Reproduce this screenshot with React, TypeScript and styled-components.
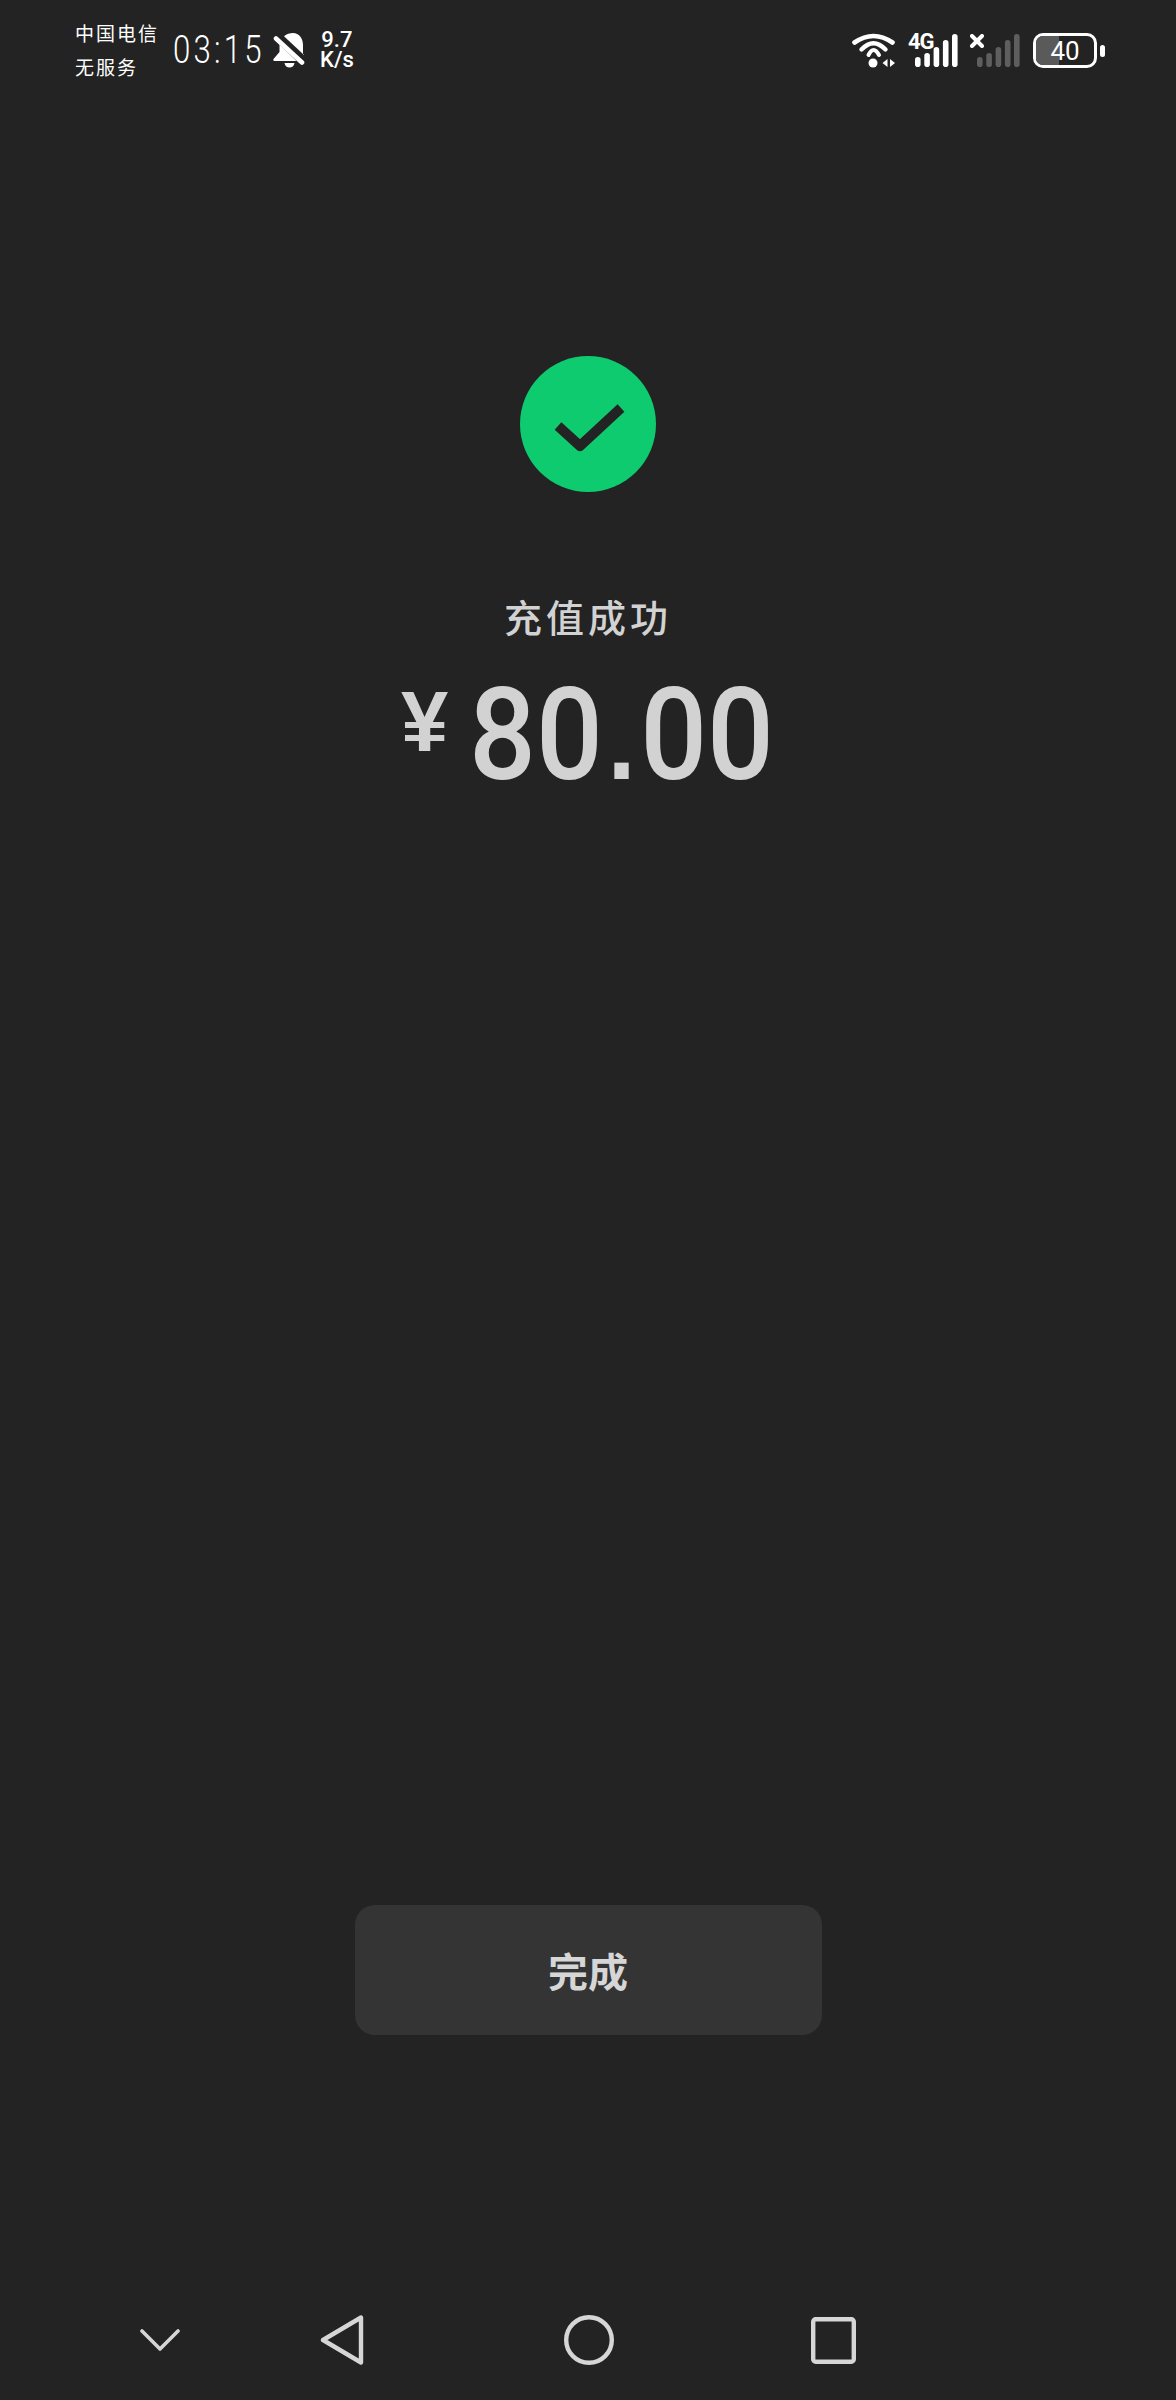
import { FC } from "react";
import styled, { createGlobalStyle } from "styled-components";

const GlobalStyle = createGlobalStyle`
  html, body {
    margin: 0;
    padding: 0;
    background: #232323;
  }
`;

const CjkStack = `"Noto Sans CJK SC", "Liberation Sans", sans-serif`;

const signalBars = [
  { x: 0, h: 10 },
  { x: 9.3, h: 14 },
  { x: 18.6, h: 20 },
  { x: 27.9, h: 27 },
  { x: 37, h: 33 },
];

const WifiIcon: FC = () => (
  <svg width="44" height="35" viewBox="0 0 44 35" fill="none">
    <path d="M2.500 9.500Q21.500 -3.500 40.500 9.500" stroke="#fff" strokeWidth="4.600" strokeLinecap="round" />
    <path d="M9.500 16.500Q21.500 3.900 33.500 16.500" stroke="#fff" strokeWidth="4.400" strokeLinecap="round" />
    <path d="M16.500 22Q21.500 12 27 22" stroke="#fff" strokeWidth="4" strokeLinecap="round" />
    <circle cx="21" cy="30" r="4.500" fill="#fff" />
    <path d="M35.500 26v8l-5-4zM38 26v8l5-4z" fill="#fff" />
  </svg>
);

const BellOffIcon: FC = () => (
  <svg width="33" height="35" viewBox="0 0 33 35" fill="none">
    <path d="M11 3.300C13.500 1 17 0 20 0C26 0 30 5 30 12V22L31 22z" fill="#fff" />
    <path d="M6.500 11.500V19L.5 26C0 27 .5 28 1.500 28H23.500z" fill="#fff" />
    <path d="M11.500 30H21.500C21 33 19 34.500 16.500 34.500S12 33 11.500 30z" fill="#fff" />
    <path d="M3 5.500L29 29.500" stroke="#fff" strokeWidth="4.600" strokeLinecap="round" />
  </svg>
);

const SignalBars: FC<{ color: string }> = ({ color }) => (
  <svg width="43" height="33" viewBox="0 0 43 33">
    {signalBars.map((bar) => (
      <rect key={bar.x} x={bar.x} y={33 - bar.h} width="5.600" height={bar.h} rx="2.800" fill={color} />
    ))}
  </svg>
);

const CrossIcon: FC = () => (
  <svg width="14" height="14" viewBox="0 0 14 14">
    <path d="M2 2l10 10M12 2L2 12" stroke="#fff" strokeWidth="4" strokeLinecap="round" />
  </svg>
);

const CheckIcon: FC = () => (
  <svg width="136" height="136" viewBox="0 0 136 136">
    <circle cx="68" cy="68" r="68" fill="#0ecb6f" />
    <path d="M38 70L60 90L101 52" fill="none" stroke="#232323" strokeWidth="10" strokeLinejoin="round" />
  </svg>
);

const App: FC = () => {
  return (
    <Page>
      <GlobalStyle />
      <StatusBar>
        <StatusLeft>
          <Carrier>
            <CarrierLine>中国电信</CarrierLine>
            <CarrierLine>无服务</CarrierLine>
          </Carrier>
          <ClockSlot>
            <Clock>03:15</Clock>
          </ClockSlot>
          <BellOffIcon />
          <NetSpeed>
            <span>9.7</span>
            <span>K/s</span>
          </NetSpeed>
        </StatusLeft>
        <StatusRight>
          <WifiIcon />
          <SignalGroup $width={43} $gap={19}>
            <NetworkLabel>4G</NetworkLabel>
            <SignalBars color="#ffffff" />
          </SignalGroup>
          <SignalGroup $width={50} $gap={12}>
            <CrossMark>
              <CrossIcon />
            </CrossMark>
            <SignalBars color="#5e5e5e" />
          </SignalGroup>
          <Battery>
            <BatteryBody>
              <BatteryFill />
              <BatteryLevel>40</BatteryLevel>
            </BatteryBody>
            <BatteryNub />
          </Battery>
        </StatusRight>
      </StatusBar>

      <Result>
        <CheckIcon />
        <ResultTitle>充值成功</ResultTitle>
        <Amount>
          <Currency>¥</Currency>
          <Value>
            80<ValueDot>.</ValueDot>00
          </Value>
        </Amount>
      </Result>

      <DoneButton>完成</DoneButton>

      <NavBar>
        <NavIcon $gap={140} width="40" height="22" viewBox="0 0 40 22">
          <path d="M2 2L20 20L38 2" fill="none" stroke="#d6d6d6" strokeWidth="3.600" strokeLinecap="round" strokeLinejoin="round" />
        </NavIcon>
        <NavIcon $gap={200} width="44" height="50" viewBox="0 0 44 50">
          <path d="M41 2.500V47.500L3 25z" fill="none" stroke="#d6d6d6" strokeWidth="4.400" strokeLinejoin="round" />
        </NavIcon>
        <NavIcon $gap={197} width="50" height="50" viewBox="0 0 50 50">
          <circle cx="25" cy="25" r="22.800" fill="none" stroke="#d6d6d6" strokeWidth="4.400" />
        </NavIcon>
        <NavIcon $gap={0} width="45" height="47" viewBox="0 0 45 47">
          <rect x="2.200" y="2.200" width="40.600" height="42.600" rx="2.500" fill="none" stroke="#d6d6d6" strokeWidth="4.400" />
        </NavIcon>
      </NavBar>
    </Page>
  );
};

const Page = styled.div`
  width: 1176px;
  height: 2400px;
  background: #232323;

  display: flex;
  flex-direction: column;
  align-items: center;
  overflow: hidden;
`;

const StatusBar = styled.div`
  width: 100%;
  box-sizing: border-box;
  height: 100px;
  padding: 20px 71px 0 75px;

  display: flex;
  justify-content: space-between;
  align-items: flex-start;
  color: #fff;
`;

const StatusLeft = styled.div`
  display: flex;
  align-items: center;
  height: 60px;
`;

const Carrier = styled.div`
  width: 98px;
  display: flex;
  flex-direction: column;
  gap: 8px;
`;

const CarrierLine = styled.span`
  font-family: ${CjkStack};
  font-size: 19px;
  line-height: 26px;
  letter-spacing: 2px;
  white-space: nowrap;
`;

const ClockSlot = styled.div`
  width: 100px;
`;

// the clock face runs narrower than Roboto's regular width
const Clock = styled.span`
  display: inline-block;
  font-family: Roboto, sans-serif;
  font-weight: 300;
  font-size: 39px;
  letter-spacing: 4px;
  transform: scaleX(0.8);
  transform-origin: left center;
`;

const NetSpeed = styled.div`
  margin-left: 14px;
  display: flex;
  flex-direction: column;
  align-items: center;
  font-family: Roboto, sans-serif;
  font-weight: 500;
  font-size: 22px;
  line-height: 20px;
`;

const StatusRight = styled.div`
  display: flex;
  align-items: flex-start;
  padding-top: 13px;
`;

const SignalGroup = styled.div<{ $width: number; $gap: number }>`
  position: relative;
  margin-left: ${({ $gap }) => $gap}px;
  margin-top: 1px;
  width: ${({ $width }) => $width}px;
  height: 33px;
  display: flex;
  justify-content: flex-end;
`;

const NetworkLabel = styled.span`
  position: absolute;
  left: -7px;
  top: -3px;
  font-family: Roboto, sans-serif;
  font-weight: 700;
  font-size: 22px;
  line-height: 22px;
  letter-spacing: -1px;
  color: #fff;
`;

const CrossMark = styled.span`
  position: absolute;
  left: 0;
  top: 0;
  display: flex;
`;

const Battery = styled.div`
  margin-left: 13px;
  display: flex;
  align-items: center;
  gap: 3px;
`;

const BatteryBody = styled.div`
  position: relative;
  width: 64px;
  height: 35px;
  box-sizing: border-box;
  border: 3px solid #fff;
  border-radius: 10px;
  overflow: hidden;

  display: flex;
  align-items: center;
  justify-content: center;
`;

const BatteryFill = styled.div`
  position: absolute;
  left: 0;
  top: 0;
  bottom: 0;
  width: 40%;
  background: #5a5a5a;
`;

const BatteryLevel = styled.span`
  position: relative;
  font-family: Roboto, sans-serif;
  font-size: 26px;
  color: #fff;
`;

const BatteryNub = styled.div`
  width: 5px;
  height: 12px;
  border-radius: 2.500px;
  background: #fff;
`;

const Result = styled.div`
  margin-top: 256px;
  display: flex;
  flex-direction: column;
  align-items: center;
`;

const ResultTitle = styled.div`
  margin-top: 96px;
  font-family: ${CjkStack};
  font-weight: 500;
  font-size: 38px;
  line-height: 56px;
  letter-spacing: 4px;
  color: #d2d2d2;
`;

const Amount = styled.div`
  margin-top: 26px;
  display: flex;
  align-items: flex-start;
  color: #d2d2d2;
  font-family: Roboto, sans-serif;
  font-weight: 500;
`;

const Currency = styled.span`
  font-family: "Liberation Sans", sans-serif;
  font-weight: 700;
  font-size: 85px;
  line-height: 96px;
  margin-top: 4px;
  margin-right: 21px;
`;

// narrowed digits; the negative margin gives back the width the transform removes
const Value = styled.span`
  display: inline-block;
  font-size: 128px;
  line-height: 130px;
  transform: scaleX(0.92);
  transform-origin: left center;
  margin-right: -26px;
`;

const ValueDot = styled.span`
  font-family: "Liberation Sans", sans-serif;
  font-weight: 700;
  font-size: 110px;
  line-height: 0;
  margin: 0 5px;
`;

const DoneButton = styled.button`
  margin-top: 1105px;
  width: 467px;
  height: 130px;
  border: none;
  border-radius: 20px;
  background: #343434;
  color: #d6d6d6;
  font-family: ${CjkStack};
  font-weight: 700;
  font-size: 40px;
`;

const NavBar = styled.div`
  margin-top: 280px;
  width: 100%;
  box-sizing: border-box;
  padding-left: 140px;

  display: flex;
  align-items: center;
`;

const NavIcon = styled.svg<{ $gap: number }>`
  margin-right: ${({ $gap }) => $gap}px;
`;

export default App;
